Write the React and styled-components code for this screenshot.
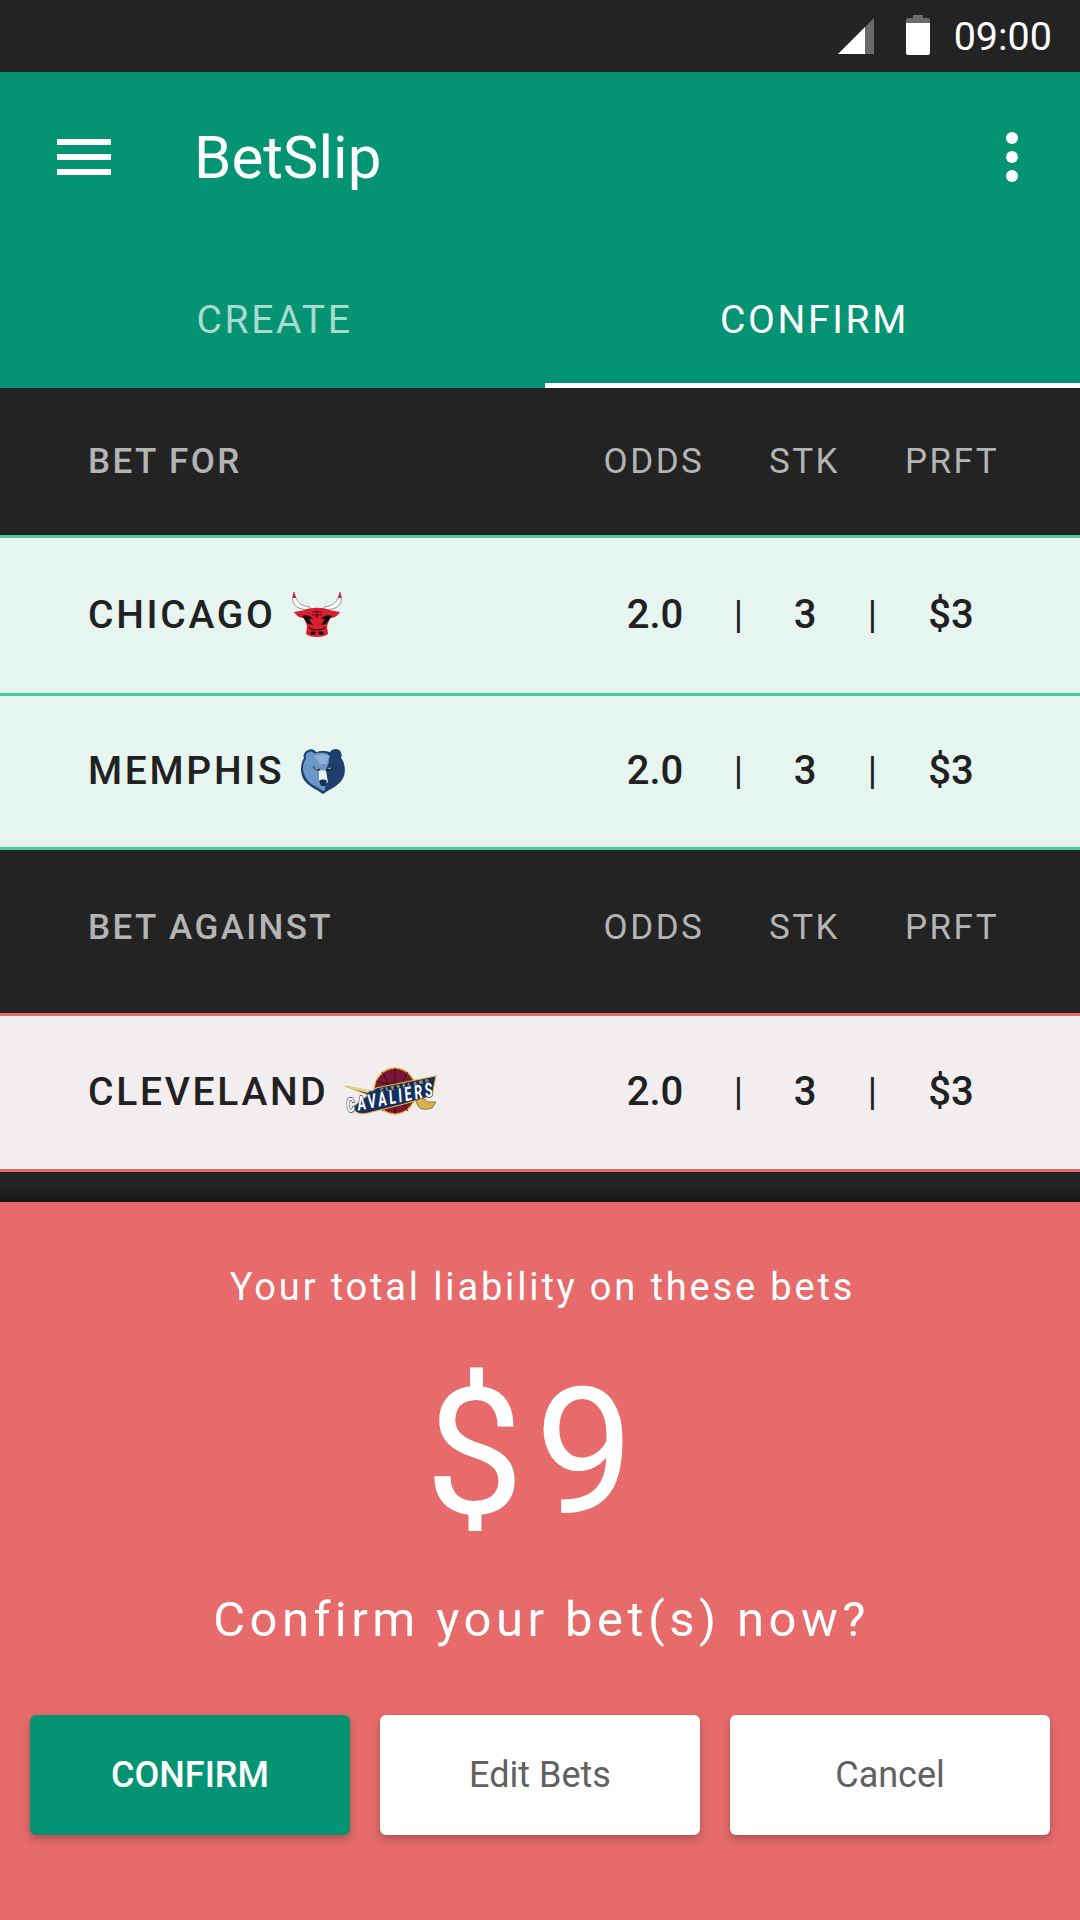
import React from 'react'
import styled, { createGlobalStyle } from 'styled-components'

const GlobalStyle = createGlobalStyle`
  html, body {
    margin: 0;
    padding: 0;
    background: #e76b6b;
    font-family: Roboto, "Liberation Sans", sans-serif;
  }
`

const Screen = styled.div`
  width: 1080px;
  height: 1920px;
  display: flex;
  flex-direction: column;
  overflow: hidden;
  background: #232323;
`

const StatusBar = styled.div`
  height: 72px;
  background: #232323;
  display: flex;
  align-items: center;
  justify-content: flex-end;
  padding-right: 28px;
  color: #fff;
  font-size: 39.5px;
`

const SignalIcon = styled.svg`
  width: 36px;
  height: 36px;
  margin-right: 32px;
`

const BatteryIcon = styled.svg`
  width: 24px;
  height: 40px;
  margin-right: 24px;
  margin-top: -2px;
`

const AppBar = styled.div`
  background: #059473;
  height: 316px;
  display: flex;
  flex-direction: column;
`

const TopRow = styled.div`
  height: 170px;
  display: flex;
  align-items: center;
  padding: 0 62px 0 57px;
  color: #fff;
`

const Burger = styled.div`
  width: 54px;
  height: 36px;
  display: flex;
  flex-direction: column;
  justify-content: space-between;
  span {
    display: block;
    height: 6px;
    background: #fff;
  }
`

const Title = styled.div`
  font-size: 60px;
  margin-left: 83px;
  flex: 1;
`

const Dots = styled.div`
  display: flex;
  flex-direction: column;
  gap: 7px;
  span {
    width: 12px;
    height: 12px;
    border-radius: 50%;
    background: #fff;
  }
`

const Tabs = styled.div`
  flex: 1;
  display: flex;
`

const Tab = styled.div`
  flex: ${p => (p.$active ? '0 0 535px' : '0 0 545px')};
  display: flex;
  align-items: center;
  justify-content: center;
  font-size: 39px;
  letter-spacing: 2.7px;
  color: ${p => (p.$active ? '#fff' : 'rgba(255,255,255,0.66)')};
  border-bottom: 5px solid ${p => (p.$active ? '#fff' : 'transparent')};
  padding: 14px 0 0 4px;
  box-sizing: border-box;
`

const HeaderRow = styled.div`
  height: ${p => p.$h}px;
  display: grid;
  grid-template-columns: 1fr 130px 36px 98px 36px 122px;
  align-items: center;
  padding: 0 68px ${p => p.$pb || 0}px 88px;
  box-sizing: border-box;
  background: #232323;
`

const HeaderLabel = styled.div`
  font-size: 35px;
  font-weight: 500;
  letter-spacing: 2.4px;
  color: #b4b4b4;
`

const ColLabel = styled.div`
  grid-column: ${p => p.$col};
  text-align: center;
  font-size: 35px;
  letter-spacing: 2.5px;
  color: #b4b4b4;
  margin-left: ${p => p.$shift || 0}px;
`

const BetRow = styled(HeaderRow)`
  padding-bottom: 2px;
  background: ${p => (p.$against ? '#f2eef0' : '#e6f5ef')};
  border-top: 3px solid ${p => (p.$against ? '#e76b6b' : '#4acb9f')};
  border-bottom: ${p => (p.$last ? `3px solid ${p.$against ? '#e76b6b' : '#4acb9f'}` : '0')};
`

const Team = styled.div`
  display: flex;
  align-items: center;
  font-size: 39px;
  font-weight: 500;
  letter-spacing: 2.7px;
  color: #212121;
`

const Value = styled.div`
  text-align: center;
  font-size: 40px;
  font-weight: 500;
  color: #212121;
`

const Sep = styled(Value)`
  font-weight: 400;
  font-size: 38px;
  padding-left: 1px;
`

const Gap = styled.div`
  height: 30px;
  background: linear-gradient(#232323 40%, #171717);
`

const LogoSvg = styled.svg`
  margin-left: ${p => p.$ml}px;
  flex: none;
`

const Liability = styled.div`
  flex: 1;
  background: #e76b6b;
  display: flex;
  flex-direction: column;
  align-items: center;
  color: #fff;
`

const Caption = styled.div`
  margin-top: 63px;
  padding-left: 5px;
  font-size: 38px;
  line-height: 44px;
  letter-spacing: 2.85px;
`

const Amount = styled.div`
  margin: 31px 10px 0 0;
  font-size: 176px;
  line-height: 226px;
  font-weight: 400;
  letter-spacing: 11px;
`

const Prompt = styled.div`
  margin-top: 26px;
  padding-left: 3px;
  font-size: 49px;
  line-height: 56px;
  letter-spacing: 4.45px;
`

const Buttons = styled.div`
  margin-top: 67px;
  align-self: stretch;
  display: grid;
  grid-template-columns: repeat(3, 320px);
  justify-content: space-between;
  padding: 0 30px;
`

const Button = styled.div`
  height: 120px;
  border-radius: 6px;
  display: flex;
  align-items: center;
  justify-content: center;
  font-size: 36px;
  font-weight: ${p => (p.$primary ? 500 : 400)};
  background: ${p => (p.$primary ? '#059473' : '#fff')};
  color: ${p => (p.$primary ? '#fff' : '#616161')};
  box-shadow: 0 4px 10px rgba(0, 0, 0, 0.25);
`

const BullLogo = () => (
  <LogoSvg $ml={15} width="52" height="46" viewBox="0 0 52 46">
    <path d="M3 0 C0 8 2 15 11 17 L19 18 L19 15 C10 14 5 10 3 0Z" fill="#fff" stroke="#8a8a8a" strokeWidth="0.9" />
    <path d="M49 0 C52 8 50 15 41 17 L33 18 L33 15 C42 14 47 10 49 0Z" fill="#fff" stroke="#8a8a8a" strokeWidth="0.9" />
    <path d="M3 0 L1.5 6 L5 6Z M49 0 L50.5 6 L47 6Z" fill="#d4142a" />
    <path d="M3 20 L14 18 C20 15 32 15 38 18 L49 20 C46 25 42 26 39 26 L36 34 L37 42 C33 46 19 46 15 42 L16 34 L13 26 C10 26 6 25 3 20Z" fill="#dc1f2e" />
    <path d="M11 24 C15 22 20 24 22 27 L18 27 L22 33 L17 32 Z M41 24 C37 22 32 24 30 27 L34 27 L30 33 L35 32 Z" fill="#17100f" />
    <path d="M21 20 H31 M21 23 H31 M26 18 V26" stroke="#5b1013" strokeWidth="1.2" />
    <path d="M18 35 C21 39 31 39 34 35" stroke="#17100f" strokeWidth="1.2" fill="none" />
    <ellipse cx="22" cy="41" rx="2.8" ry="1.7" fill="#17100f" />
    <ellipse cx="30" cy="41" rx="2.8" ry="1.7" fill="#17100f" />
  </LogoSvg>
)

const BearLogo = () => (
  <LogoSvg $ml={16} width="46" height="46" viewBox="0 0 46 46">
    <path d="M8 2 C12 0 15 2 16 4 C20 2.5 26 2.5 30 4 C32 1 36 0 39 2 C42 4 42 8 41 10 C46 16 46 26 42 32 C38 38 30 41 23 46 C16 41 8 38 4 32 C0 26 0 16 4 10 C3 7 4 4 8 2Z" fill="#1f3f6e" />
    <path d="M8.5 4 C11 3 13 4 14 5.5 C18 4.5 25 4.5 28 6 L29 14 L26 22 L25 42 L23 43 C16 38 9 36 6 30 C2 24 2 16 6 11 C5 8 6 5 8.5 4Z" fill="#6b97c9" />
    <path d="M14 8 C20 6 26 6 30 8 L26 16 L20 16Z" fill="#8fb1d8" />
    <path d="M12 18 L20 21 L20 23 L15 22Z" fill="#24426f" />
    <path d="M34 18 L26 21 L26 23 L31 22Z" fill="#10294f" />
    <path d="M14.5 19 L19 21 L15.5 21Z" fill="#f2bd2b" />
    <path d="M31.5 19 L27 21 L30.5 21Z" fill="#f2bd2b" />
    <path d="M19 23 C21 22 24 22 26 23 L28 34 C26 36 21 36 19 34Z" fill="#eef2f6" />
    <path d="M19 33 C21 31 25 31 27 33 L25 38 L21 38Z" fill="#12335e" />
  </LogoSvg>
)

const CavsLogo = () => (
  <LogoSvg $ml={16} width="94" height="50" viewBox="0 0 94 50">
    <ellipse cx="51" cy="24" rx="21" ry="23" fill="#7c1436" stroke="#e8b83a" strokeWidth="1.4" />
    <path d="M32 14 C42 18 60 18 70 14 M51 1 V47 M38 5 C46 14 46 34 38 44 M64 5 C56 14 56 34 64 44" stroke="#3b0a1e" strokeWidth="1" fill="none" />
    <path d="M1 19 L28 24 L32 21 L92 9 L88 29 L60 37 L28 45 C16 49 8 46 11 38 L24 28Z" fill="#12305f" stroke="#e8b83a" strokeWidth="1.1" />
    <path d="M2 19 L26 23.5 L24 26 L9 22Z" fill="#e8d9a0" />
    <path d="M72 34 C76 30 80 31 84 35 L92 35 L88 41 C82 43 76 43 74 39Z" fill="#d8b24a" stroke="#6b5a1e" strokeWidth="0.7" />
    <text textAnchor="middle" fontFamily="Roboto, sans-serif" fontSize="5" fontWeight="700" fill="#e8c86a" transform="translate(62 20) rotate(-11)">CLEVELAND</text>
    <text textAnchor="middle" fontFamily="Roboto, sans-serif" fontSize="13" fontWeight="700" fontStyle="italic" fill="#fff" stroke="#12305f" strokeWidth="1" paintOrder="stroke" transform="translate(48 37) rotate(-11) scale(1 1.5)">CAVALIERS</text>
  </LogoSvg>
)

const Header = ({ label, h, pb }) => (
  <HeaderRow $h={h} $pb={pb}>
    <HeaderLabel>{label}</HeaderLabel>
    <ColLabel $col={2} $shift={-2}>ODDS</ColLabel>
    <ColLabel $col={4} $shift={-1}>STK</ColLabel>
    <ColLabel $col={6} $shift={2}>PRFT</ColLabel>
  </HeaderRow>
)

const Bet = ({ team, logo, against, last, h }) => (
  <BetRow $h={h} $against={against} $last={last}>
    <Team>{team}{logo}</Team>
    <Value>2.0</Value>
    <Sep>|</Sep>
    <Value>3</Value>
    <Sep>|</Sep>
    <Value>$3</Value>
  </BetRow>
)

export default function App() {
  return (
    <Screen>
      <GlobalStyle />
      <StatusBar>
        <SignalIcon viewBox="0 0 36 36">
          <path d="M0 36 L27 9 V36Z" fill="#fff" />
          <path d="M27 9 L36 0 V36 H27Z" fill="#6b6b6b" />
        </SignalIcon>
        <BatteryIcon viewBox="0 0 24 40">
          <path d="M7 0 H17 V3 H22 Q24 3 24 5 V8 H0 V5 Q0 3 2 3 H7Z" fill="#6b6b6b" />
          <path d="M0 8 H24 V38 Q24 40 22 40 H2 Q0 40 0 38Z" fill="#fff" />
        </BatteryIcon>
        <span>09:00</span>
      </StatusBar>
      <AppBar>
        <TopRow>
          <Burger><span /><span /><span /></Burger>
          <Title>BetSlip</Title>
          <Dots><span /><span /><span /></Dots>
        </TopRow>
        <Tabs>
          <Tab>CREATE</Tab>
          <Tab $active>CONFIRM</Tab>
        </Tabs>
      </AppBar>
      <Header label="BET FOR" h={147} />
      <Bet team="CHICAGO" logo={<BullLogo />} h={158} />
      <Bet team="MEMPHIS" logo={<BearLogo />} h={157} last />
      <Header label="BET AGAINST" h={163} pb={8} />
      <Bet team="CLEVELAND" logo={<CavsLogo />} against last h={159} />
      <Gap />
      <Liability>
        <Caption>Your total liability on these bets</Caption>
        <Amount>$9</Amount>
        <Prompt>Confirm your bet(s) now?</Prompt>
        <Buttons>
          <Button $primary>CONFIRM</Button>
          <Button>Edit Bets</Button>
          <Button>Cancel</Button>
        </Buttons>
      </Liability>
    </Screen>
  )
}
